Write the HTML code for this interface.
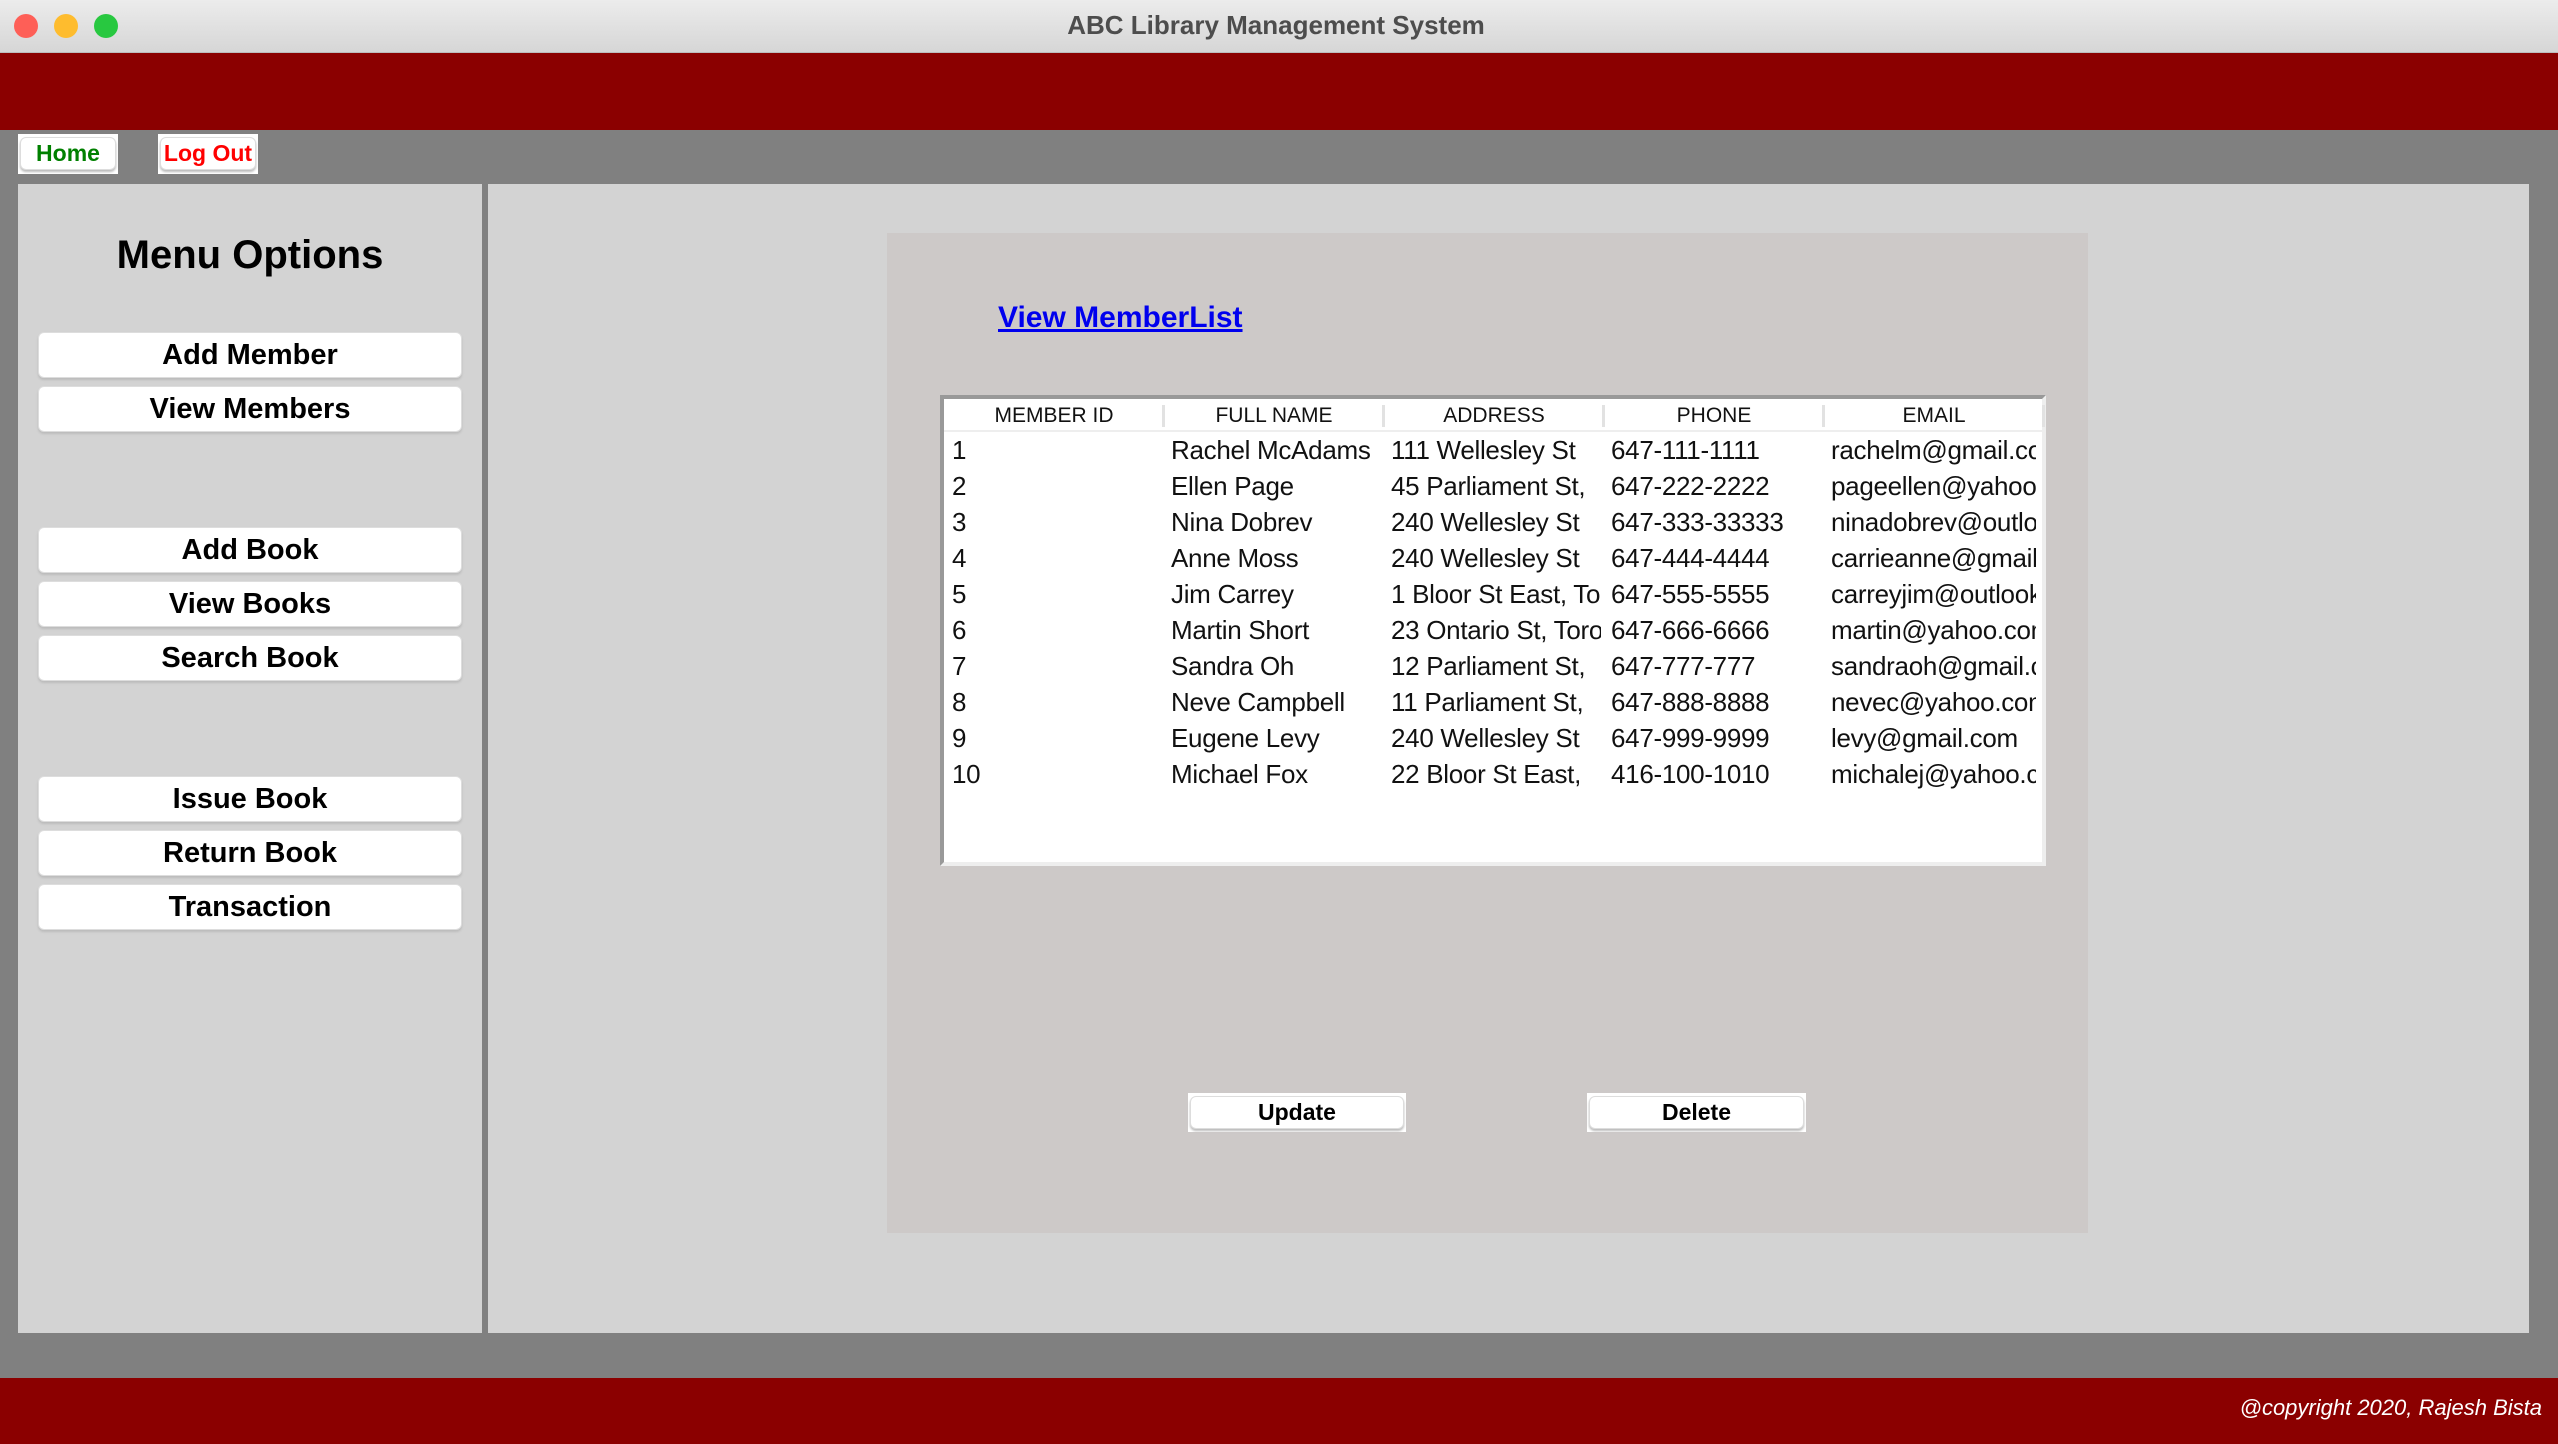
<!DOCTYPE html>
<html><head><meta charset="utf-8"><style>
*{margin:0;padding:0;box-sizing:border-box}
body{width:2558px;height:1444px;position:relative;overflow:hidden;background:#808080;font-family:"Liberation Sans",Arial,sans-serif}
.a{position:absolute}
.btn{position:absolute;background:#fff;border:1px solid #ddd;border-radius:6px;box-shadow:0 2px 2px #bbb;font-weight:bold;text-align:center;color:#000}
.m{left:38px;width:424px;height:46px;font-size:29px;line-height:44px}
.row{position:absolute;left:0;width:1100px;height:36px;font-size:26px;line-height:36px;color:#111;letter-spacing:-0.3px}
.row span{position:absolute;white-space:nowrap;overflow:hidden}
</style></head><body>
<div class="a" style="left:0;top:0;width:2558px;height:53px;background:linear-gradient(#ececec,#d6d6d6);border-bottom:1px solid #bdbdbd"></div>
<div class="a" style="left:14px;top:14px;width:24px;height:24px;border-radius:50%;background:#fe5f57"></div>
<div class="a" style="left:54px;top:14px;width:24px;height:24px;border-radius:50%;background:#febc2e"></div>
<div class="a" style="left:94px;top:14px;width:24px;height:24px;border-radius:50%;background:#28c840"></div>
<div class="a" style="left:0;top:8px;width:2552px;text-align:center;font-size:26px;font-weight:bold;color:#4d4d4d;line-height:34px">ABC Library Management System</div>
<div class="a" style="left:0;top:53px;width:2558px;height:77px;background:#8b0000"></div>

<div class="a" style="left:18px;top:134px;width:100px;height:40px;background:#fff"></div>
<div class="btn" style="left:20px;top:137px;width:96px;height:33px;font-size:23px;line-height:31px;color:#008000">Home</div>
<div class="a" style="left:158px;top:134px;width:100px;height:40px;background:#fff"></div>
<div class="btn" style="left:160px;top:137px;width:96px;height:33px;font-size:23px;line-height:31px;color:#ff0000">Log Out</div>

<div class="a" style="left:18px;top:184px;width:464px;height:1149px;background:#d3d3d3"></div>
<div class="a" style="left:488px;top:184px;width:2041px;height:1149px;background:#d3d3d3"></div>
<div class="a" style="left:18px;top:232px;width:464px;text-align:center;font-size:40px;font-weight:bold;line-height:46px">Menu Options</div>

<div class="btn m" style="top:332px">Add Member</div>
<div class="btn m" style="top:386px">View Members</div>
<div class="btn m" style="top:527px">Add Book</div>
<div class="btn m" style="top:581px">View Books</div>
<div class="btn m" style="top:635px">Search Book</div>
<div class="btn m" style="top:776px">Issue Book</div>
<div class="btn m" style="top:830px">Return Book</div>
<div class="btn m" style="top:884px">Transaction</div>

<div class="a" style="left:887px;top:233px;width:1201px;height:1000px;background:#cdc9c8"></div>
<div class="a" style="left:998px;top:298px;font-size:30px;font-weight:bold;color:#0000ee;text-decoration:underline;line-height:40px">View MemberList</div>

<div class="a" style="left:940px;top:395px;width:1106px;height:471px;background:#fff;border:4px solid #999;border-right-color:#eee;border-bottom-color:#eee">
 <div class="a" style="left:0;top:0;width:1100px;height:33px;border-bottom:2px solid #eee;font-size:21px;line-height:34px;color:#111">
  <span class="a" style="left:0;width:220px;text-align:center">MEMBER ID</span>
  <span class="a" style="left:220px;width:220px;text-align:center">FULL NAME</span>
  <span class="a" style="left:440px;width:220px;text-align:center">ADDRESS</span>
  <span class="a" style="left:660px;width:220px;text-align:center">PHONE</span>
  <span class="a" style="left:880px;width:220px;text-align:center">EMAIL</span>
  <div class="a" style="left:218px;top:6px;width:3px;height:22px;background:#e2e2e2"></div>
  <div class="a" style="left:438px;top:6px;width:3px;height:22px;background:#e2e2e2"></div>
  <div class="a" style="left:658px;top:6px;width:3px;height:22px;background:#e2e2e2"></div>
  <div class="a" style="left:878px;top:6px;width:3px;height:22px;background:#e2e2e2"></div>
  <div class="a" style="left:1098px;top:6px;width:3px;height:22px;background:#e2e2e2"></div>
 </div>
 <div class="row" style="top:33px"><span style="left:8px">1</span><span style="left:227px;width:210px">Rachel McAdams</span><span style="left:447px;width:210px">111 Wellesley St</span><span style="left:667px">647-111-1111</span><span style="left:887px;width:205px">rachelm@gmail.com</span></div>
 <div class="row" style="top:69px"><span style="left:8px">2</span><span style="left:227px;width:210px">Ellen Page</span><span style="left:447px;width:210px">45 Parliament St,</span><span style="left:667px">647-222-2222</span><span style="left:887px;width:205px">pageellen@yahoo.com</span></div>
 <div class="row" style="top:105px"><span style="left:8px">3</span><span style="left:227px;width:210px">Nina Dobrev</span><span style="left:447px;width:210px">240 Wellesley St</span><span style="left:667px">647-333-33333</span><span style="left:887px;width:205px">ninadobrev@outlook.com</span></div>
 <div class="row" style="top:141px"><span style="left:8px">4</span><span style="left:227px;width:210px">Anne Moss</span><span style="left:447px;width:210px">240 Wellesley St</span><span style="left:667px">647-444-4444</span><span style="left:887px;width:205px">carrieanne@gmail.com</span></div>
 <div class="row" style="top:177px"><span style="left:8px">5</span><span style="left:227px;width:210px">Jim Carrey</span><span style="left:447px;width:210px">1 Bloor St East, Toronto</span><span style="left:667px">647-555-5555</span><span style="left:887px;width:205px">carreyjim@outlook.com</span></div>
 <div class="row" style="top:213px"><span style="left:8px">6</span><span style="left:227px;width:210px">Martin Short</span><span style="left:447px;width:210px">23 Ontario St, Toronto</span><span style="left:667px">647-666-6666</span><span style="left:887px;width:205px">martin@yahoo.com</span></div>
 <div class="row" style="top:249px"><span style="left:8px">7</span><span style="left:227px;width:210px">Sandra Oh</span><span style="left:447px;width:210px">12 Parliament St,</span><span style="left:667px">647-777-777</span><span style="left:887px;width:205px">sandraoh@gmail.com</span></div>
 <div class="row" style="top:285px"><span style="left:8px">8</span><span style="left:227px;width:210px">Neve Campbell</span><span style="left:447px;width:210px">11 Parliament St,</span><span style="left:667px">647-888-8888</span><span style="left:887px;width:205px">nevec@yahoo.com</span></div>
 <div class="row" style="top:321px"><span style="left:8px">9</span><span style="left:227px;width:210px">Eugene Levy</span><span style="left:447px;width:210px">240 Wellesley St</span><span style="left:667px">647-999-9999</span><span style="left:887px;width:205px">levy@gmail.com</span></div>
 <div class="row" style="top:357px"><span style="left:8px">10</span><span style="left:227px;width:210px">Michael Fox</span><span style="left:447px;width:210px">22 Bloor St East,</span><span style="left:667px">416-100-1010</span><span style="left:887px;width:205px">michalej@yahoo.com</span></div>
</div>

<div class="a" style="left:1188px;top:1093px;width:218px;height:39px;background:#fff"></div>
<div class="btn" style="left:1190px;top:1096px;width:214px;height:33px;font-size:23px;line-height:31px">Update</div>
<div class="a" style="left:1587px;top:1093px;width:219px;height:39px;background:#fff"></div>
<div class="btn" style="left:1589px;top:1096px;width:215px;height:33px;font-size:23px;line-height:31px">Delete</div>

<div class="a" style="left:0;top:1378px;width:2558px;height:66px;background:#8b0000"></div>
<div class="a" style="right:16px;top:1394px;font-size:22px;font-style:italic;color:#fff;line-height:28px">@copyright 2020, Rajesh Bista</div>
</body></html>
